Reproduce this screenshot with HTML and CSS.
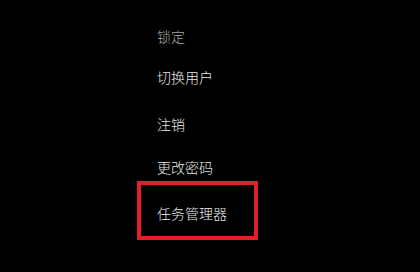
FILE: index.html
```html
<!DOCTYPE html>
<html lang="zh-CN">
<head>
<meta charset="utf-8">
<link rel="stylesheet" href="styles.css">
</head>
<body>
<div class="menu">
  <div class="item dim">锁定</div>
  <div class="item item-2">切换用户</div>
  <div class="item item-3">注销</div>
  <div class="item item-4">更改密码</div>
  <div class="item highlighted">任务管理器</div>
</div>
</body>
</html>
```
FILE: styles.css
```css
html, body {
  margin: 0;
  padding: 0;
  background: #000;
  width: 420px;
  height: 272px;
  overflow: hidden;
}
.menu {
  display: flex;
  flex-direction: column;
  align-items: flex-start;
  padding: 22px 0 0 157px;
  font-family: "Microsoft YaHei", "Noto Sans CJK SC", sans-serif;
  font-size: 14px;
  font-weight: 300;
  color: #e8e8e8;
}
.item {
  height: 28px;
  line-height: 28px;
  white-space: nowrap;
}
.dim { color: #a8a8a8; }
.item-2 { margin-top: 13px; }
.item-3 { margin-top: 19px; }
.item-4 { margin-top: 15px; }
.highlighted {
  margin-left: -20px;
  width: 97px;
  height: 28px;
  padding: 14px 0 9px 16px;
  border: 4px solid #e3202a;
}
```
